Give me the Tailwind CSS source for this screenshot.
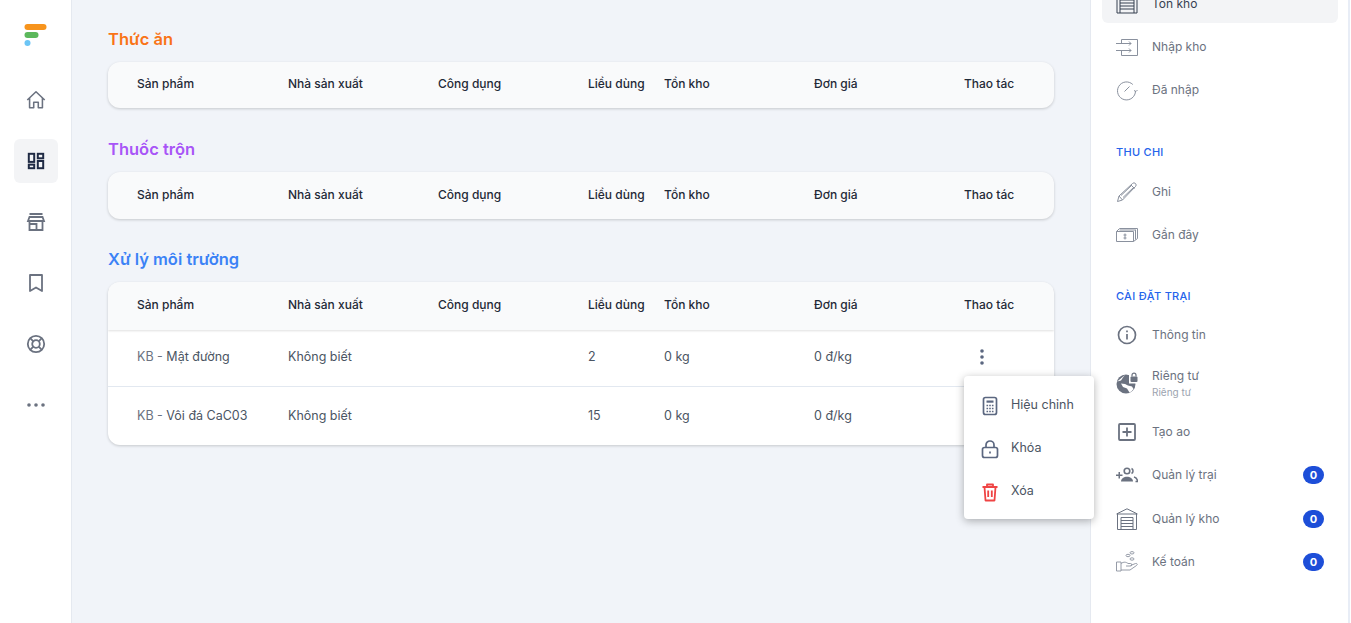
<!DOCTYPE html>
<html lang="vi">
<head>
  <meta charset="UTF-8" />
  <title>Tồn kho</title>
  <script src="https://cdn.jsdelivr.net/npm/@tailwindcss/browser@4"></script>
</head>
<body class="bg-white font-['Inter',sans-serif] text-[12.5px] text-[#4b5563]">
  <div class="flex h-[623px] overflow-hidden">

    <!-- left icon rail -->
    <aside class="w-[72px] shrink-0 bg-white border-r border-[#e5e9f0] flex flex-col items-center text-[#6b7280]">
      <svg class="mt-[24px] w-[23px] h-[22px]" viewBox="0 0 23 22">
        <rect x="0.5" y="0" width="22" height="6" rx="3" fill="#f7941d"/>
        <rect x="0.5" y="8" width="14" height="6" rx="3" fill="#5cb85c"/>
        <circle cx="3.5" cy="19" r="3" fill="#6cc5f5"/>
      </svg>
      <div class="mt-[32px] flex flex-col gap-[17px]">
        <a class="w-11 h-11 flex items-center justify-center">
          <svg class="w-[22px] h-[22px]" viewBox="0 0 24 24" fill="none" stroke="currentColor" stroke-width="1.7" stroke-linejoin="round"><path d="M2.500 12 12 3l9.500 9M5 10v10.500h4.500V14.500h5v6H19V10"/></svg>
        </a>
        <a class="w-11 h-11 flex items-center justify-center rounded-md bg-[#f3f4f6] text-[#1f2a44]">
          <svg class="w-[18px] h-[18px]" viewBox="0 0 20 20" fill="none" stroke="currentColor" stroke-width="2.200"><rect x="2" y="2" width="6" height="9"/><rect x="12" y="2" width="6" height="5"/><rect x="2" y="14" width="6" height="4"/><rect x="12" y="10" width="6" height="8"/></svg>
        </a>
        <a class="w-11 h-11 flex items-center justify-center">
          <svg class="w-[20px] h-[20px]" viewBox="0 0 20 20" fill="none" stroke="currentColor" stroke-width="1.800"><path d="M3.500 2h13M2 9l1.500-4h13L18 9zM3.500 9v9h7v-6h-7M10.500 18h6V9"/></svg>
        </a>
        <a class="w-11 h-11 flex items-center justify-center">
          <svg class="w-[20px] h-[20px]" viewBox="0 0 20 20" fill="none" stroke="currentColor" stroke-width="1.800" stroke-linejoin="round"><path d="M4 2h12v16l-6-3.500L4 18z"/></svg>
        </a>
        <a class="w-11 h-11 flex items-center justify-center">
          <svg class="w-[20px] h-[20px]" viewBox="0 0 20 20" fill="none" stroke="currentColor" stroke-width="1.800"><circle cx="10" cy="10" r="8.200"/><circle cx="10" cy="10" r="3.800"/><path d="m4.200 4.200 3.100 3.100M15.800 4.200l-3.100 3.100M4.200 15.800l3.100-3.100M15.800 15.800l-3.100-3.100"/></svg>
        </a>
        <a class="w-11 h-11 flex items-center justify-center">
          <svg class="w-[18px] h-[4px]" viewBox="0 0 18 4" fill="currentColor"><circle cx="2" cy="2" r="1.800"/><circle cx="9" cy="2" r="1.800"/><circle cx="16" cy="2" r="1.800"/></svg>
        </a>
      </div>
    </aside>

    <!-- main content -->
    <main class="relative w-[1018px] shrink-0 bg-[#f1f4f9] pl-[36px] pr-[36px] pt-[29px]">
      <h2 class="h-5 leading-5 text-[16.5px] font-semibold text-[#f97316]">Thức ăn</h2>
      <div class="mt-[13px] rounded-xl bg-[#f9fafb] shadow-[0_1px_3px_rgba(0,0,0,0.18)]">
        <div class="grid grid-cols-[151px_150px_150px_76px_150px_150px_90px] h-[46px] items-center pl-[29px] pb-0.5 text-[12px] font-medium text-[#1f2937]">
          <span>Sản phẩm</span><span>Nhà sản xuất</span><span>Công dụng</span><span>Liều dùng</span><span>Tồn kho</span><span>Đơn giá</span><span>Thao tác</span>
        </div>
      </div>

      <h2 class="mt-[31px] h-5 leading-5 text-[16.5px] font-semibold text-[#a855f7]">Thuốc trộn</h2>
      <div class="mt-[13px] rounded-xl bg-[#f9fafb] shadow-[0_1px_3px_rgba(0,0,0,0.18)]">
        <div class="grid grid-cols-[151px_150px_150px_76px_150px_150px_90px] h-[47px] items-center pl-[29px] pb-0.5 text-[12px] font-medium text-[#1f2937]">
          <span>Sản phẩm</span><span>Nhà sản xuất</span><span>Công dụng</span><span>Liều dùng</span><span>Tồn kho</span><span>Đơn giá</span><span>Thao tác</span>
        </div>
      </div>

      <h2 class="mt-[30px] h-5 leading-5 text-[16.5px] font-semibold text-[#3b82f6]">Xử lý môi trường</h2>
      <div class="mt-[13px] rounded-xl bg-white shadow-[0_1px_3px_rgba(0,0,0,0.18)] overflow-hidden">
        <div class="grid grid-cols-[151px_150px_150px_76px_150px_150px_90px] h-[48px] items-center pl-[29px] pb-0.5 text-[12px] font-medium text-[#1f2937] bg-[#f9fafb] shadow-[0_1px_2px_rgba(0,0,0,0.12)]">
          <span>Sản phẩm</span><span>Nhà sản xuất</span><span>Công dụng</span><span>Liều dùng</span><span>Tồn kho</span><span>Đơn giá</span><span>Thao tác</span>
        </div>
        <div class="grid grid-cols-[151px_150px_150px_76px_150px_150px_90px] h-[57px] items-center pl-[29px] pb-0.5 border-b border-[#e2e8f0]">
          <span><span class="text-[#6b7280]">KB -</span> Mật đường</span><span>Không biết</span><span></span><span>2</span><span>0 kg</span><span>0 đ/kg</span>
          <svg class="ml-4 w-1 h-[16px]" viewBox="0 0 4 16" fill="#5b6780"><circle cx="2" cy="2" r="1.800"/><circle cx="2" cy="8" r="1.800"/><circle cx="2" cy="14" r="1.800"/></svg>
        </div>
        <div class="grid grid-cols-[151px_150px_150px_76px_150px_150px_90px] h-[58px] items-center pl-[29px]">
          <span><span class="text-[#6b7280]">KB -</span> Vôi đá CaC03</span><span>Không biết</span><span></span><span>15</span><span>0 kg</span><span>0 đ/kg</span><span></span>
        </div>
      </div>

      <!-- row action menu -->
      <div class="absolute left-[892px] top-[376px] w-[130px] h-[143px] bg-white rounded shadow-[0_2px_8px_rgba(0,0,0,0.3)] pt-[7px] text-[#4b5563]">
        <div class="h-[43px] pt-0.5 flex items-center pl-[16px] gap-[11px]">
          <svg class="w-5 h-5" viewBox="0 0 20 20" fill="none" stroke="#5b6780" stroke-width="1.700"><rect x="3.500" y="1.500" width="13" height="17" rx="2"/><rect x="6.500" y="4.500" width="7" height="2.200" fill="#5b6780" stroke="none"/><path stroke-width="1.600" stroke-dasharray="1.600 1.100" d="M6.500 9.500h7M6.500 12.500h7M6.500 15.500h7"/></svg>
          <span>Hiệu chỉnh</span>
        </div>
        <div class="h-[43px] pt-0.5 flex items-center pl-[16px] gap-[11px]">
          <svg class="w-5 h-5" viewBox="0 0 20 20" fill="none" stroke="#5b6780" stroke-width="1.700"><rect x="2.500" y="8.500" width="15" height="10" rx="2"/><path d="M6 8.500V6a4 4 0 0 1 8 0v2.500"/><path d="M10 12.500v2"/></svg>
          <span>Khóa</span>
        </div>
        <div class="h-[43px] pt-0.5 flex items-center pl-[16px] gap-[11px]">
          <svg class="w-5 h-5" viewBox="0 0 20 20" fill="none" stroke="#ef4444" stroke-width="1.800" stroke-linejoin="round"><path d="M2.500 5h15M7 5V2.500h6V5M4.500 5l1 13.500h9l1-13.500M8.200 8.500v6.500M11.800 8.500v6.500"/></svg>
          <span>Xóa</span>
        </div>
      </div>
    </main>

    <!-- right menu -->
    <aside class="flex-1 mr-px bg-white border-l border-r-2 border-l-[#e5e9f0] border-r-[#e8edf6] pl-[11px] pr-[10px] -mt-[16px] h-[660px] text-[12px] text-[#6b7280]">
      <div class="flex flex-col gap-1">
        <a class="h-[39px] flex items-center px-[14px] rounded-md bg-[#f3f4f6] text-[#374151]">
          <svg class="w-[22px] h-[22px] shrink-0" viewBox="0 0 22 22" fill="none" stroke="#374151" stroke-width="1"><path d="M1 4h20v16H1zM4 7h14v13M4 7v13M4 10h14M4 13h14M4 16h14"/></svg>
          <span class="ml-[14px]">Tồn kho</span>
        </a>
        <a class="h-[39px] flex items-center px-[14px]">
          <svg class="w-[22px] h-[22px] shrink-0" viewBox="0 0 22 22" fill="none" stroke="#8a919e" stroke-width="1"><path d="M5.500 3.500h16v16h-16v-5M5.500 7v-3.500M0 7.500h15M0 14.500h15M13 5.500l2 2-2 2M13 12.500l2 2-2 2"/></svg>
          <span class="ml-[14px]">Nhập kho</span>
        </a>
        <a class="h-[39px] flex items-center px-[14px]">
          <svg class="w-[22px] h-[22px] shrink-0" viewBox="0 0 22 22" fill="none" stroke="#8a919e" stroke-width="1"><path d="M19.500 12a9 9 0 1 1-2.700-6.500"/><path d="m8.500 12.500 5-5M18 11.500l2 1 1.500-1.500"/></svg>
          <span class="ml-[14px]">Đã nhập</span>
        </a>
      </div>

      <div class="mt-[35px] h-4 leading-4 px-[14px] text-[11px] font-medium tracking-wide text-[#2563eb]">THU CHI</div>
      <div class="mt-[12px] flex flex-col gap-1">
        <a class="h-[39px] flex items-center px-[14px]">
          <svg class="w-[22px] h-[22px] shrink-0" viewBox="0 0 22 22" fill="none" stroke="#8a919e" stroke-width="1" stroke-linejoin="round"><path d="M1.500 20.500 3 15 16.500 2.500a2 2 0 0 1 3 3L6.500 19zM3 15l3.500 4M15 4l3.500 3.500M5 14.500l11-10.500M7 16.500 18 6"/></svg>
          <span class="ml-[14px]">Ghi</span>
        </a>
        <a class="h-[39px] flex items-center px-[14px]">
          <svg class="w-[22px] h-[22px] shrink-0" viewBox="0 0 22 22" fill="none" stroke="#8a919e" stroke-width="1"><path d="M0.500 7.500h17v10h-17zM0.500 7.500l3-3h18v10l-4 3M3.500 6h16.500M19.500 6v9.500M9 9.500v6M7.500 11h3M7.500 14h3"/></svg>
          <span class="ml-[14px]">Gần đây</span>
        </a>
      </div>

      <div class="mt-[34px] h-4 leading-4 px-[14px] text-[11px] font-medium tracking-wide text-[#2563eb]">CÀI ĐẶT TRẠI</div>
      <div class="mt-[11px] flex flex-col gap-1">
        <a class="h-[39px] flex items-center px-[14px]">
          <svg class="w-[22px] h-[22px] shrink-0" viewBox="0 0 22 22" fill="none" stroke="#6b7280" stroke-width="1.700"><circle cx="11" cy="11" r="8.500"/><path d="M11 10v5.500M11 6.500v1.800"/></svg>
          <span class="ml-[14px]">Thông tin</span>
        </a>
        <a class="h-[50px] flex items-center px-[14px]">
          <svg class="w-[22px] h-[22px] shrink-0" viewBox="0 0 22 22"><circle cx="10" cy="12" r="9.500" fill="#6b7280"/><path d="M13.500 20.500 11 16.500l-4-1.500-2-3.500 4 .5 3 1.500 4 1 1.500 2.500a9.500 9.500 0 0 1-4.500 4zM1.200 9.500 5 8.500l2-3 2-2.500" fill="#fff"/><path d="M13 2h9v9.500h-9z" fill="#fff"/><rect x="14.500" y="4.500" width="7" height="5.500" rx="1" fill="#6b7280"/><path d="M16 4.500V3.200a2 2 0 0 1 4 0v1.300" fill="none" stroke="#6b7280" stroke-width="1.200"/></svg>
          <span class="ml-[14px] flex flex-col">
            <span>Riêng tư</span>
            <span class="text-[10px] leading-[14px] text-[#9ca3af]">Riêng tư</span>
          </span>
        </a>
        <a class="h-[39px] flex items-center px-[14px]">
          <svg class="w-[22px] h-[22px] shrink-0" viewBox="0 0 22 22" fill="none" stroke="#6b7280" stroke-width="1.800"><rect x="3" y="3" width="16" height="16" rx="1"/><path d="M11 6.500v9M6.500 11h9"/></svg>
          <span class="ml-[14px]">Tạo ao</span>
        </a>
        <a class="h-[40px] flex items-center px-[14px]">
          <svg class="w-[22px] h-[22px] shrink-0" viewBox="0 0 22 22" fill="#6b7280"><path d="M0 10.500h2.500V8h1.500v2.500h2.500V12H4v2.500H2.500V12H0z"/><circle cx="11" cy="7" r="2.800" fill="none" stroke="#6b7280" stroke-width="1.600"/><path d="M5 17.500c0-3 3-4.700 6-4.700s6 1.700 6 4.700z"/><path d="M15.500 4.500a2.800 2.800 0 0 1 0 5M18 13c1.800.6 3.500 2 3.500 4.500h-2" fill="none" stroke="#6b7280" stroke-width="1.500"/></svg>
          <span class="ml-[14px] flex-1">Quản lý trại</span>
          <span class="w-[21px] h-[18px] rounded-full bg-[#1d4ed8] text-white text-[11px] font-bold flex items-center justify-center">0</span>
        </a>
        <a class="h-[40px] flex items-center px-[14px]">
          <svg class="w-[22px] h-[22px] shrink-0" viewBox="0 0 22 22" fill="none" stroke="#6b7280" stroke-width="1"><path d="M0.500 6 11 .8 21.500 6M1.500 6h19v15.500h-19zM5 9.500h12v12M5 9.500v12M5 12.500h12M5 15.500h12M5 18.500h12"/></svg>
          <span class="ml-[14px] flex-1">Quản lý kho</span>
          <span class="w-[21px] h-[18px] rounded-full bg-[#1d4ed8] text-white text-[11px] font-bold flex items-center justify-center">0</span>
        </a>
        <a class="h-[40px] -mt-px flex items-center px-[14px]">
          <svg class="w-[22px] h-[22px] shrink-0" viewBox="0 0 22 22" fill="none" stroke="#8a919e" stroke-width="0.900"><path d="M.5 11h4.500v9H.5zM5 12.500c3-2 5-1.500 7 0h2.500a1.200 1.200 0 0 1 0 2.500H10M14.500 14.500l5-2c1.500-.5 2.500 1 1 2l-6.500 4.500H5"/><ellipse cx="16" cy="1.800" rx="2" ry="1.200"/><ellipse cx="12" cy="4.500" rx="2" ry="1.200"/><ellipse cx="16" cy="8" rx="2" ry="1.200"/></svg>
          <span class="ml-[14px] flex-1">Kế toán</span>
          <span class="w-[21px] h-[18px] rounded-full bg-[#1d4ed8] text-white text-[11px] font-bold flex items-center justify-center">0</span>
        </a>
      </div>
    </aside>
  </div>
</body>
</html>
